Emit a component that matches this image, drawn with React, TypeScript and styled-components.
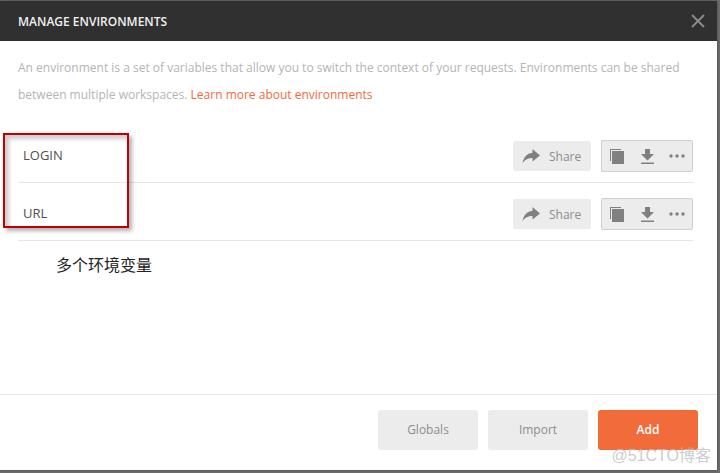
import React from "react";
import styled, { createGlobalStyle } from "styled-components";

const Global = createGlobalStyle`
  html, body {
    margin: 0;
    padding: 0;
    width: 720px;
    height: 473px;
    overflow: hidden;
    background: #6e6e6e;
  }
`;

const Page = styled.div`
  position: relative;
  width: 720px;
  height: 473px;
  padding-top: 1px;
  box-sizing: border-box;
  background: #6e6e6e;
  font-family: "Open Sans", "Noto Sans CJK SC", sans-serif;
`;

const Dialog = styled.div`
  display: flex;
  flex-direction: column;
  width: 717px;
  height: 469px;
  background: #fff;
  box-shadow: 0 0 3px rgba(0, 0, 0, 0.4);
`;

const Header = styled.header`
  display: flex;
  align-items: center;
  justify-content: space-between;
  flex: 0 0 40px;
  padding: 0 12px 0 18px;
  background: #303030;
`;

const Title = styled.h1`
  margin: 0;
  font-size: 12px;
  font-weight: 600;
  color: #f0f0f0;
`;

const Close = styled.button`
  display: flex;
  padding: 0;
  border: 0;
  background: none;
`;

const Body = styled.div`
  flex: 1;
  padding: 13px 24px 0 18px;
`;

const Intro = styled.p`
  margin: 0 0 17px;
  font-size: 12px;
  line-height: 27px;
  color: #b4b4b4;
  white-space: nowrap;
`;

const Learn = styled.a`
  color: #f26b3a;
`;

const EnvRow = styled.div`
  display: flex;
  align-items: center;
  justify-content: space-between;
  box-sizing: border-box;
  height: 58px;
  padding: 5px 0 0 5px;
  border-bottom: 1px solid #e6e6e6;
`;

const EnvName = styled.span`
  margin-bottom: 2px;
  font-size: 13px;
  color: #505050;
`;

const Actions = styled.div`
  display: flex;
  align-items: center;
  gap: 10px;
`;

const ShareButton = styled.button`
  display: flex;
  align-items: center;
  gap: 9px;
  box-sizing: border-box;
  width: 78px;
  height: 30px;
  padding: 0 0 0 9px;
  border: 0;
  border-radius: 2px;
  background: #ececec;
  font: inherit;
  font-size: 12px;
  color: #8c8c8c;
`;

const ToolGroup = styled.div`
  display: flex;
  align-items: center;
  justify-content: space-between;
  box-sizing: border-box;
  width: 92px;
  height: 32px;
  padding: 0 7px 0 8px;
  border: 1px solid #cfcfcf;
  border-radius: 2px;
  background: #ececec;
`;

const DownloadSlot = styled.span`
  display: flex;
  margin-left: 2px;
`;

const Note = styled.div`
  margin: 13px 0 0 38px;
  font-family: "Noto Sans CJK SC", sans-serif;
  font-size: 16px;
  line-height: 20px;
  color: #222;
`;

const Footer = styled.footer`
  display: flex;
  justify-content: flex-end;
  gap: 10px;
  flex: 0 0 76px;
  padding: 15px 19px 0 0;
  box-sizing: border-box;
  border-top: 1px solid #e6e6e6;
`;

const FooterButton = styled.button<{ $primary?: boolean }>`
  width: 100px;
  height: 40px;
  padding: 0 0 2px;
  border: 0;
  border-radius: 3px;
  background: ${(p) => (p.$primary ? "#f26b3a" : "#ececec")};
  font: inherit;
  font-size: 12px;
  font-weight: ${(p) => (p.$primary ? 600 : 400)};
  color: ${(p) => (p.$primary ? "#fff" : "#8c8c8c")};
`;

const Annotation = styled.div`
  position: absolute;
  left: 3px;
  top: 133px;
  width: 126px;
  height: 95px;
  box-sizing: border-box;
  border: 2px solid #c00000;
  box-shadow: 3px 3px 4px rgba(0, 0, 0, 0.3), inset 4px 4px 4px rgba(0, 0, 0, 0.2);
`;

const Watermark = styled.div`
  position: absolute;
  right: 9px;
  bottom: 7px;
  font-family: "Liberation Sans", "Noto Sans CJK SC", sans-serif;
  font-size: 16px;
  color: rgba(190, 190, 190, 0.8);
`;

const CloseIcon = () => (
  <svg width="14" height="14" viewBox="0 0 14 14">
    <path d="M1 1l12 12M13 1L1 13" stroke="#8a8a8a" strokeWidth="2" />
  </svg>
);

const ShareIcon = () => (
  <svg width="18" height="14" viewBox="0 0 18 14">
    <path d="M10.500 0L18 6.500l-7.500 6V9C6 9 3 10.500 0.500 14 1.500 8.500 5 4.500 10.500 3.800z" fill="#808080" />
  </svg>
);

const CopyIcon = () => (
  <svg width="14" height="15" viewBox="0 0 14 15">
    <path d="M0 0h11v1H1v11H0z" fill="#808080" />
    <path d="M2 2h12v13H2z" fill="#808080" />
  </svg>
);

const DownloadIcon = () => (
  <svg width="13" height="15" viewBox="0 0 13 15">
    <path d="M4 0h5v5h4l-6.500 6.500L0 5h4z" fill="#808080" />
    <path d="M0 13.500h13V15H0z" fill="#808080" />
  </svg>
);

const MoreIcon = () => (
  <svg width="16" height="4" viewBox="0 0 16 4">
    <circle cx="2" cy="2" r="1.700" fill="#808080" />
    <circle cx="8" cy="2" r="1.700" fill="#808080" />
    <circle cx="14" cy="2" r="1.700" fill="#808080" />
  </svg>
);

const environments = ["LOGIN", "URL"];

export default function App() {
  return (
    <Page>
      <Global />
      <Dialog>
        <Header>
          <Title>MANAGE ENVIRONMENTS</Title>
          <Close>
            <CloseIcon />
          </Close>
        </Header>
        <Body>
          <Intro>
            An environment is a set of variables that allow you to switch the context of your requests. Environments can be shared
            <br />
            between multiple workspaces. <Learn>Learn more about environments</Learn>
          </Intro>
          {environments.map((name) => (
            <EnvRow key={name}>
              <EnvName>{name}</EnvName>
              <Actions>
                <ShareButton>
                  <ShareIcon />
                  Share
                </ShareButton>
                <ToolGroup>
                  <CopyIcon />
                  <DownloadSlot>
                    <DownloadIcon />
                  </DownloadSlot>
                  <MoreIcon />
                </ToolGroup>
              </Actions>
            </EnvRow>
          ))}
          <Note>多个环境变量</Note>
        </Body>
        <Footer>
          <FooterButton>Globals</FooterButton>
          <FooterButton>Import</FooterButton>
          <FooterButton $primary>Add</FooterButton>
        </Footer>
      </Dialog>
      <Annotation />
      <Watermark>@51CTO博客</Watermark>
    </Page>
  );
}
